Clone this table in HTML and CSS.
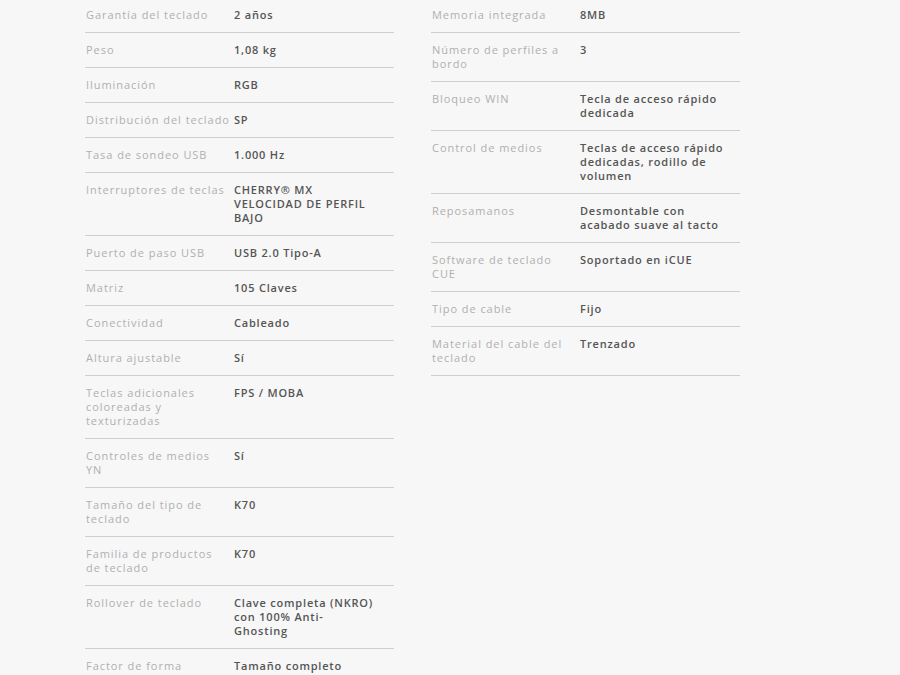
FILE: index.html
```html
<!DOCTYPE html>
<html lang="es">
<head>
<meta charset="utf-8">
<link rel="stylesheet" href="styles.css">
</head>
<body>
<div class="specs">
  <div class="col">
    <div class="row"><div class="label">Garantía del teclado</div><div class="value">2 años</div></div>
    <div class="row"><div class="label">Peso</div><div class="value">1,08 kg</div></div>
    <div class="row"><div class="label">Iluminación</div><div class="value">RGB</div></div>
    <div class="row"><div class="label nowrap">Distribución del teclado</div><div class="value">SP</div></div>
    <div class="row"><div class="label">Tasa de sondeo USB</div><div class="value">1.000 Hz</div></div>
    <div class="row"><div class="label">Interruptores de teclas</div><div class="value">CHERRY® MX<br>VELOCIDAD DE PERFIL<br>BAJO</div></div>
    <div class="row"><div class="label">Puerto de paso USB</div><div class="value">USB 2.0 Tipo-A</div></div>
    <div class="row"><div class="label">Matriz</div><div class="value">105 Claves</div></div>
    <div class="row"><div class="label">Conectividad</div><div class="value">Cableado</div></div>
    <div class="row"><div class="label">Altura ajustable</div><div class="value">Sí</div></div>
    <div class="row"><div class="label">Teclas adicionales coloreadas y texturizadas</div><div class="value">FPS / MOBA</div></div>
    <div class="row"><div class="label">Controles de medios YN</div><div class="value">Sí</div></div>
    <div class="row"><div class="label">Tamaño del tipo de teclado</div><div class="value">K70</div></div>
    <div class="row"><div class="label">Familia de productos de teclado</div><div class="value">K70</div></div>
    <div class="row"><div class="label">Rollover de teclado</div><div class="value">Clave completa (NKRO)<br>con 100% Anti-<br>Ghosting</div></div>
    <div class="row"><div class="label">Factor de forma</div><div class="value">Tamaño completo</div></div>
  </div>
  <div class="col">
    <div class="row"><div class="label">Memoria integrada</div><div class="value">8MB</div></div>
    <div class="row"><div class="label">Número de perfiles a bordo</div><div class="value">3</div></div>
    <div class="row"><div class="label">Bloqueo WIN</div><div class="value">Tecla de acceso rápido dedicada</div></div>
    <div class="row"><div class="label">Control de medios</div><div class="value">Teclas de acceso rápido dedicadas, rodillo de volumen</div></div>
    <div class="row"><div class="label">Reposamanos</div><div class="value">Desmontable con acabado suave al tacto</div></div>
    <div class="row"><div class="label">Software de teclado CUE</div><div class="value">Soportado en iCUE</div></div>
    <div class="row"><div class="label">Tipo de cable</div><div class="value">Fijo</div></div>
    <div class="row"><div class="label">Material del cable del teclado</div><div class="value">Trenzado</div></div>
  </div>
</div>
</body>
</html>
```
FILE: styles.css
```css
html, body {
  margin: 0;
  padding: 0;
  background: #f7f7f7;
}
body {
  font-family: "Open Sans", "DejaVu Sans", sans-serif;
  font-size: 11px;
  line-height: 14px;
}
.specs {
  display: grid;
  grid-template-columns: 309px 309px;
  column-gap: 37px;
  align-items: start;
  margin-top: -2px;
  padding-left: 85px;
}
.row {
  display: grid;
  grid-template-columns: 149px 1fr;
  padding: 10px 0;
  border-bottom: 1px solid #cfcfcf;
}
.label {
  color: #b0b0b0;
  letter-spacing: 0.95px;
  padding-left: 1px;
  padding-right: 7px;
}
.label.nowrap {
  white-space: nowrap;
}
.value {
  color: #555;
  font-weight: 600;
  letter-spacing: 0.8px;
  padding-right: 11px;
}
```
